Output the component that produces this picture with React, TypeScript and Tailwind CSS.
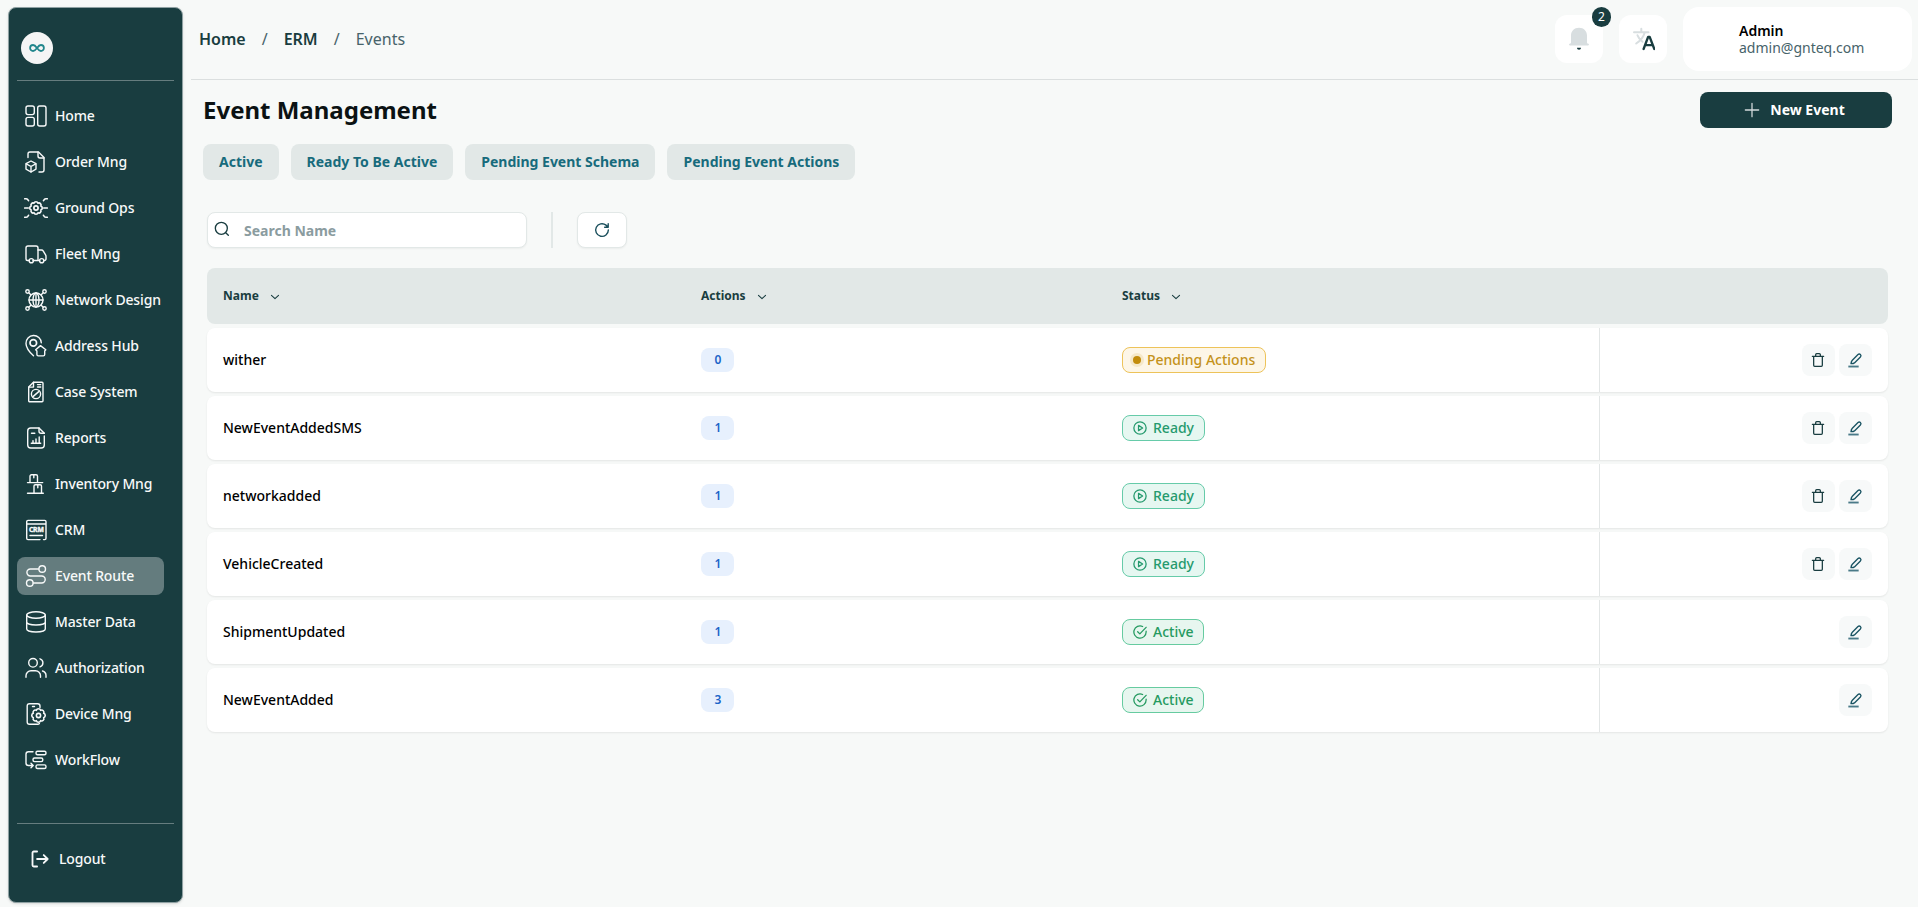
import type { ReactNode } from "react";

// scalloped gear outline around (cx, cy)
function gearPath(cx: number, cy: number, r: number, teeth = 8) {
  let d = "";
  for (let i = 0; i <= teeth; i++) {
    const a = (i / teeth) * Math.PI * 2 - Math.PI / 2 - Math.PI / teeth;
    const x = (cx + r * Math.cos(a)).toFixed(2);
    const y = (cy + r * Math.sin(a)).toFixed(2);
    d += i === 0 ? `M${x} ${y}` : `A${r * 0.4} ${r * 0.4} 0 0 1 ${x} ${y}`;
  }
  return d + "Z";
}

function Icon({
  children,
  size = 24,
  stroke = 1.4,
  className,
}: {
  children: ReactNode;
  size?: number;
  stroke?: number;
  className?: string;
}) {
  return (
    <svg
      width={size}
      height={size}
      viewBox="0 0 24 24"
      fill="none"
      stroke="currentColor"
      strokeWidth={stroke}
      strokeLinecap="round"
      strokeLinejoin="round"
      className={className}
      aria-hidden
    >
      {children}
    </svg>
  );
}

const NAV: { label: string; icon: ReactNode; active?: boolean }[] = [
  {
    label: "Home",
    icon: (
      <>
        <rect x="2" y="2" width="8.3" height="8.6" rx="2" />
        <rect x="2" y="13.4" width="8.3" height="8.6" rx="2" />
        <rect x="13.7" y="2" width="8.3" height="20" rx="2" />
      </>
    ),
  },
  {
    label: "Order Mng",
    icon: (
      <>
        <path d="M4 7.5V4a2 2 0 0 1 2-2h8.5L20 7.5V20a2 2 0 0 1-2 2h-3" />
        <path d="M14 2v4a2 2 0 0 0 2 2h4" />
        <path d="m7 11 5 2.7v5.4L7 22l-5-2.9v-5.4Z" />
        <path d="m2.3 13.9 4.7 2.6 4.7-2.6M7 16.5V22" />
      </>
    ),
  },
  {
    label: "Ground Ops",
    icon: (
      <>
        <path d={gearPath(12, 12, 5.2)} strokeWidth="1.6" />
        <circle cx="12" cy="12" r="2.1" strokeWidth="1.7" />
        <path
          d="M.7 12h3.6M19.7 12h3.6M.7 2.7h1.5c1.3 0 1.8 1 2.3 2M.7 21.3h1.5c1.3 0 1.8-1 2.3-2M23.3 2.7h-1.5c-1.3 0-1.8 1-2.3 2M23.3 21.3h-1.5c-1.3 0-1.8-1-2.3-2"
          strokeWidth="1.6"
        />
      </>
    ),
  },
  {
    label: "Fleet Mng",
    icon: (
      <>
        <path d="M5 18.5H3.5A1.5 1.5 0 0 1 2 17V6a2 2 0 0 1 2-2h8a2 2 0 0 1 2 2v12.5H9" />
        <path d="M14 8h3.5c.8 0 1.4.4 1.8 1.1l2.4 4c.2.4.3.8.3 1.2V17a1.5 1.5 0 0 1-1.5 1.5M14.5 18.5h1" />
        <circle cx="7.3" cy="18.7" r="2.1" />
        <circle cx="17.7" cy="18.7" r="2.1" />
      </>
    ),
  },
  {
    label: "Network Design",
    icon: (
      <>
        <circle cx="12" cy="12" r="7" />
        <ellipse cx="12" cy="12" rx="3" ry="7" />
        <path d="M5 12h14M12 5v14M4.8 4.8l2 2M19.2 4.8l-2 2M4.8 19.2l2-2M19.2 19.2l-2-2" />
        <circle cx="3.5" cy="3.5" r="1.7" />
        <circle cx="20.5" cy="3.5" r="1.7" />
        <circle cx="3.5" cy="20.5" r="1.7" />
        <circle cx="20.5" cy="20.5" r="1.7" />
      </>
    ),
  },
  {
    label: "Address Hub",
    icon: (
      <>
        <path d="M9.5 21.8C6 18.5 2 13.8 2 9.4a7.6 7.6 0 0 1 15.3-.6" />
        <circle cx="9.3" cy="8.9" r="3.3" strokeWidth="1.7" />
        <path d="m16.5 11.6 5.3 4.2-1.1 1.1v3.6a1.4 1.4 0 0 1-1.4 1.4h-5a1.4 1.4 0 0 1-1.4-1.4v-3.6l-1.2-1.1Z" />
      </>
    ),
  },
  {
    label: "Case System",
    icon: (
      <>
        <path d="M9.5 2.3H18a1 1 0 0 1 1 1v17.4a1 1 0 0 1-1 1H5.7a1 1 0 0 1-1-1V7.1Z" />
        <path d="M9.5 2.3v4.8H4.7M13.5 4.6h3.2M13.5 7h3.2" />
        <circle cx="12" cy="14" r="4.6" />
        <path d="m9 16.6 6-5.2" />
      </>
    ),
  },
  {
    label: "Reports",
    icon: (
      <>
        <path d="M20.3 10v9a3 3 0 0 1-3 3H6.7a3 3 0 0 1-3-3V5a3 3 0 0 1 3-3H15l5.3 5.3" />
        <path d="M15 2v3.3a2 2 0 0 0 2 2h3.3M7.5 7.3h3.3M7.3 17.2h9.4M9 17v-2.4M12 17v-4M15.2 17v-6" />
      </>
    ),
  },
  {
    label: "Inventory Mng",
    icon: (
      <>
        <path d="M3.5 10.6h15.2M3.5 21.3h15.8" />
        <path d="M6 10.3V4.2a1.4 1.4 0 0 1 1.4-1.4h4.7a1.4 1.4 0 0 1 1.4 1.4v6.1M9.8 2.8v3" />
        <path d="M10 21V14a1.3 1.3 0 0 1 1.3-1.3h4.9a1.3 1.3 0 0 1 1.3 1.3v7M13.8 12.7v3" />
      </>
    ),
  },
  {
    label: "CRM",
    icon: (
      <>
        <path d="M16 21.6H4a1.3 1.3 0 0 1-1.3-1.3V3.7A1.3 1.3 0 0 1 4 2.4h16.7A1.3 1.3 0 0 1 22 3.7v16.6a1.3 1.3 0 0 1-1.3 1.3H19.500M2.7 6h19.2M6 17.5h12.5" />
        <text
          x="12.3"
          y="13.9"
          textAnchor="middle"
          fontSize="6.8"
          fontWeight="700"
          fill="currentColor"
          strokeWidth=".4"
        >
          CRM
        </text>
      </>
    ),
  },
  {
    label: "Event Route",
    active: true,
    icon: (
      <>
        <circle cx="18.2" cy="5" r="3.3" />
        <circle cx="5.8" cy="19" r="3.3" />
        <path d="M14.7 5H6.4a3.5 3.5 0 0 0 0 7h11.3a3.5 3.5 0 0 1 0 7H9.3" />
      </>
    ),
  },
  {
    label: "Master Data",
    icon: (
      <>
        <ellipse cx="12" cy="5" rx="9.3" ry="3.2" />
        <path d="M2.7 5v14c0 1.7 4.2 3 9.3 3s9.3-1.3 9.3-3V5M2.7 12c0 1.7 4.2 3 9.3 3s9.3-1.3 9.3-3" />
      </>
    ),
  },
  {
    label: "Authorization",
    icon: (
      <>
        <circle cx="9" cy="6.8" r="4.3" />
        <path d="M2 21.3v-1.6a5 5 0 0 1 5-5h4.5a5 5 0 0 1 5 5v1.6M16 2.8a4.2 4.2 0 0 1 0 8M18.5 15c2 .6 3.5 2.4 3.5 4.5v1.8" />
      </>
    ),
  },
  {
    label: "Device Mng",
    icon: (
      <>
        <path d="M16 5.5V4a2.3 2.3 0 0 0-2.3-2.3H5.5A2.3 2.3 0 0 0 3.2 4v16a2.3 2.3 0 0 0 2.3 2.3h8.2c.7 0 1.3-.3 1.7-.8M8.5 4.5h2" />
        <path d={gearPath(14.5, 13.5, 5.6)} strokeWidth="1.6" />
        <circle cx="14.5" cy="13.5" r="2.1" strokeWidth="1.6" />
      </>
    ),
  },
  {
    label: "WorkFlow",
    icon: (
      <>
        <path d="M9 3.7H4.5A2.5 2.5 0 0 0 2 6.2V15a2.5 2.5 0 0 0 2.5 2.5h4M7 15.3l2.2 2.2L7 19.7" />
        <rect x="12" y="3.2" width="10" height="3.6" rx="1.5" />
        <rect x="9" y="10" width="9.8" height="3.6" rx="1.5" />
        <rect x="12" y="16.9" width="10" height="3.6" rx="1.5" />
      </>
    ),
  },
];

const FILTERS = ["Active", "Ready To Be Active", "Pending Event Schema", "Pending Event Actions"];

type Status = "pending" | "ready" | "active";

const EVENTS: { name: string; actions: number; status: Status }[] = [
  { name: "wither", actions: 0, status: "pending" },
  { name: "NewEventAddedSMS", actions: 1, status: "ready" },
  { name: "networkadded", actions: 1, status: "ready" },
  { name: "VehicleCreated", actions: 1, status: "ready" },
  { name: "ShipmentUpdated", actions: 1, status: "active" },
  { name: "NewEventAdded", actions: 3, status: "active" },
];

function Sidebar() {
  return (
    <aside className="mt-[7px] mb-1 ml-2 flex w-[175px] shrink-0 flex-col rounded-lg border border-[#8fa1a3] bg-[#193d40] px-2 text-[#f7f9f9] shadow-sm">
      <div className="flex h-[73px] items-center border-b border-[#667d7f] pt-[8px] pl-1">
        <div className="grid h-8 w-8 place-items-center rounded-full bg-[#f5f5f5] text-[#22868c]">
          <svg width="16" height="8" viewBox="0 0 16 8" fill="none" stroke="currentColor" strokeWidth="1.8" aria-hidden>
            <path d="M8 4C6.7 2.2 5.7 1 4.1 1a3 3 0 0 0 0 6C5.7 7 6.7 5.8 8 4s2.3-3 3.9-3a3 3 0 0 1 0 6C10.3 7 9.3 5.8 8 4Z" />
          </svg>
        </div>
      </div>

      <nav className="mt-4 flex flex-col gap-2">
        {NAV.map((item) => (
          <a
            key={item.label}
            className={
              item.active
                ? "flex h-[38px] w-[147px] items-center gap-[7px] rounded-lg bg-[#647c7e] pl-[7px] text-sm font-medium tracking-[-0.14px] whitespace-nowrap"
                : "flex h-[38px] w-[147px] items-center gap-[7px] rounded-lg pl-[7px] text-sm font-medium tracking-[-0.14px] whitespace-nowrap"
            }
          >
            <Icon className="shrink-0">{item.icon}</Icon>
            {item.label}
          </a>
        ))}
      </nav>

      <div className="mt-auto flex h-[79px] items-center gap-[9px] border-t border-[#667d7f] pb-[8px] pl-[13px] text-sm font-medium tracking-[-0.14px]">
        <Icon size={20} stroke={2.2}>
          <path d="M8.5 3H4.5A1.5 1.5 0 0 0 3 4.5v15A1.5 1.5 0 0 0 4.5 21h4M8.5 12H21M16.5 7.3 21.2 12l-4.7 4.7" />
        </Icon>
        Logout
      </div>
    </aside>
  );
}

function Header() {
  return (
    <header className="ml-2 flex h-20 items-start justify-between border-b border-[#dbdfdf] pr-1.5">
      <div className="flex h-[78px] items-center pl-2 text-base font-semibold text-[#193d40]">
        <span>Home</span>
        <span className="px-4 font-normal text-[#47636a]">/</span>
        <span>ERM</span>
        <span className="px-4 font-normal text-[#47636a]">/</span>
        <span className="font-normal text-[#47636a]">Events</span>
      </div>

      <div className="flex h-[78px] items-center gap-4">
        <div className="relative grid h-12 w-12 place-items-center rounded-xl bg-white">
          <svg width="24" height="24" viewBox="0 0 24 24" aria-hidden>
            <path
              d="M12 .8c-4.8 0-8 3.4-8 7.8v6.6c0 1-.6 1.4-1.5 1.6-.6.1-.6 1.6.3 1.6h18.4c.9 0 .9-1.5.3-1.6-.9-.2-1.5-.6-1.5-1.6V8.6C20 4.2 16.8.8 12 .8Z"
              fill="#d8dee0"
            />
            <path d="M10 20.8h4c0 1.2-.8 2-2 2s-2-.8-2-2Z" fill="#193d40" />
          </svg>
          <span className="absolute -top-2 -right-2 grid h-5 w-[19px] place-items-center rounded-full bg-[#193d40] text-xs text-white">
            2
          </span>
        </div>
        <div className="grid h-12 w-12 place-items-center rounded-xl bg-white">
          <svg width="24" height="24" viewBox="0 0 24 24" fill="none" strokeLinecap="round" aria-hidden>
            <path
              d="M3 5.3h14.500M10.3 1.8v3.4M13.7 5.5c-1 4-4.5 8.500-8.5 11M6.5 8.3c1 2.5 2.7 4.7 5 6.5"
              stroke="#d8dee0"
              strokeWidth="2"
            />
            <path
              d="m12.6 22 4.5-12h1.6l4.6 12M14.3 18.2h7.3"
              stroke="#193d40"
              strokeWidth="2.3"
              strokeLinejoin="round"
            />
          </svg>
        </div>
        <div className="flex h-16 w-[229px] flex-col justify-center rounded-2xl bg-white pl-14 text-sm leading-[17px]">
          <span className="font-semibold text-black">Admin</span>
          <span className="text-[#47636a]">admin@gnteq.com</span>
        </div>
      </div>
    </header>
  );
}

function StatusBadge({ status }: { status: Status }) {
  if (status === "pending") {
    return (
      <span className="flex h-[26px] w-fit items-center gap-[3px] rounded-lg border border-[#edc35a] bg-[#fdf6e7] pr-[10px] pl-[7px] text-sm font-medium text-[#c4921b]">
        <span className="grid h-3.5 w-3.5 place-items-center rounded-full bg-[#f5e8c9]">
          <span className="h-2 w-2 rounded-full bg-[#c28c0c]" />
        </span>
        Pending Actions
      </span>
    );
  }
  if (status === "ready") {
    return (
      <span className="flex h-[26px] w-fit items-center gap-1.5 rounded-lg border border-[#66cba9] bg-[#e6f7f1] px-[10px] text-sm font-medium text-[#259a6e]">
        <Icon size={14} stroke={2.2}>
          <circle cx="12" cy="12" r="10.5" />
          <path d="M9.5 7.5v9l7-4.5Z" />
        </Icon>
        Ready
      </span>
    );
  }
  return (
    <span className="flex h-[26px] w-fit items-center gap-1.5 rounded-lg border border-[#66cba0] bg-[#e7f6ef] pr-[9px] pl-[10px] text-sm font-medium text-[#259a60]">
      <Icon size={14} stroke={2.2}>
        <path d="M22.5 10.5v1.5a10.5 10.5 0 1 1-6-9.5" />
        <path d="m8 11.5 3.7 3.7L22.500 4" />
      </Icon>
      Active
    </span>
  );
}

function SortHead({ label }: { label: string }) {
  return (
    <div className="flex items-center gap-[11px] px-4 text-xs font-bold">
      {label}
      <Icon size={10} stroke={2.6} className="mt-0.5">
        <path d="m3.5 8 8.5 8 8.5-8" />
      </Icon>
    </div>
  );
}

function EventTable() {
  return (
    <div className="mt-5 flex w-[1681px] flex-col gap-1">
      <div className="grid h-14 grid-cols-[478px_421px_493px_1fr] items-center rounded-lg bg-[#e2e8e7] text-[#193d40]">
        <SortHead label="Name" />
        <SortHead label="Actions" />
        <SortHead label="Status" />
      </div>
      {EVENTS.map((event) => (
        <div
          key={event.name}
          className="grid h-16 grid-cols-[478px_421px_493px_1fr] rounded-lg bg-white shadow-[0_1px_2px_rgba(0,0,0,0.08)]"
        >
          <div className="flex items-center px-4 text-sm font-medium text-black">{event.name}</div>
          <div className="flex items-center px-4">
            <span className="grid h-6 w-[33px] place-items-center rounded-lg bg-[#e7f0fd] pl-px text-xs font-semibold text-[#1c64c8]">
              {event.actions}
            </span>
          </div>
          <div className="flex items-center px-4">
            <StatusBadge status={event.status} />
          </div>
          <div className="flex items-center justify-end gap-1 border-l border-[#e2e6e6] pr-4">
            {event.status !== "active" && (
              <button
                className="grid h-8 w-[33px] place-items-center rounded-lg bg-[#f7f9f9] pr-px pb-px text-[#193d40]"
                aria-label="Delete"
              >
                <Icon size={16} stroke={1.9}>
                  <path d="M3.5 6.5h17M5.5 6.5V20A1.5 1.5 0 0 0 7 21.5h10a1.5 1.5 0 0 0 1.5-1.5V6.500M8.5 6V4A1.5 1.5 0 0 1 10 2.5h4A1.5 1.5 0 0 1 15.5 4v2" />
                </Icon>
              </button>
            )}
            <button
              className="grid h-8 w-[33px] place-items-center rounded-lg bg-[#f7f9f9] pr-px pb-px text-[#1a5463]"
              aria-label="Edit"
            >
              <Icon size={16} stroke={2}>
                <path d="M6 17.5c.2-2.2.6-3.6 2-5l8.5-8.7a2.5 2.5 0 0 1 3.6 3.6L11.5 16c-1.4 1.4-3.2 1.5-5.5 1.5Z" />
                <path d="M2 21.8h15.5" stroke="#4a7a88" strokeWidth="2.8" strokeLinecap="butt" />
              </Icon>
            </button>
          </div>
        </div>
      ))}
    </div>
  );
}

export default function App() {
  return (
    <div className="flex h-[907px] overflow-hidden bg-[#f7f9f8] font-['Noto_Sans',sans-serif]">
      <Sidebar />
      <div className="min-w-0 flex-1">
        <Header />
        <main className="pt-3 pl-5">
          <div className="flex items-center justify-between pr-[26px]">
            <h1 className="text-2xl leading-9 font-bold text-[#0b1213]">Event Management</h1>
            <button className="flex h-9 w-48 items-center justify-center gap-[10px] rounded-lg bg-[#193d40] pr-[3px] text-sm font-bold text-white">
              <Icon size={16} stroke={1.9} className="text-[#d3dadb]">
                <path d="M12 2v20M2 12h20" />
              </Icon>
              New Event
            </button>
          </div>

          <div className="mt-4 flex gap-3">
            {FILTERS.map((filter) => (
              <button key={filter} className="h-9 rounded-lg bg-[#e2e8e7] px-4 text-sm font-bold text-[#176b7c]">
                {filter}
              </button>
            ))}
          </div>

          <div className="mt-8 pl-1">
            <div className="flex items-center">
              <div className="flex h-9 w-80 items-center gap-[14px] rounded-lg border border-[#e2e8e7] bg-white pl-[6px] text-sm font-bold text-[#8b9c9f] shadow-xs">
                <Icon size={16} stroke={2} className="mb-0.5 text-[#193d40]">
                  <circle cx="11" cy="11" r="9" />
                  <path d="m18 18 3.5 3.5" />
                </Icon>
                <span className="pt-px">Search Name</span>
              </div>
              <div className="ml-6 h-9 w-0.5 bg-[#e2e8e7]" />
              <button
                className="ml-6 grid h-9 w-[50px] place-items-center rounded-lg border border-[#e2e8e7] bg-white text-[#1a4f5c] shadow-xs"
                aria-label="Refresh"
              >
                <Icon size={16} stroke={2.1}>
                  <path d="M21.5 12A9.5 9.5 0 1 1 18 4.7l3 2.8M21.3 2.5v5.3H16" />
                </Icon>
              </button>
            </div>
            <EventTable />
          </div>
        </main>
      </div>
    </div>
  );
}
